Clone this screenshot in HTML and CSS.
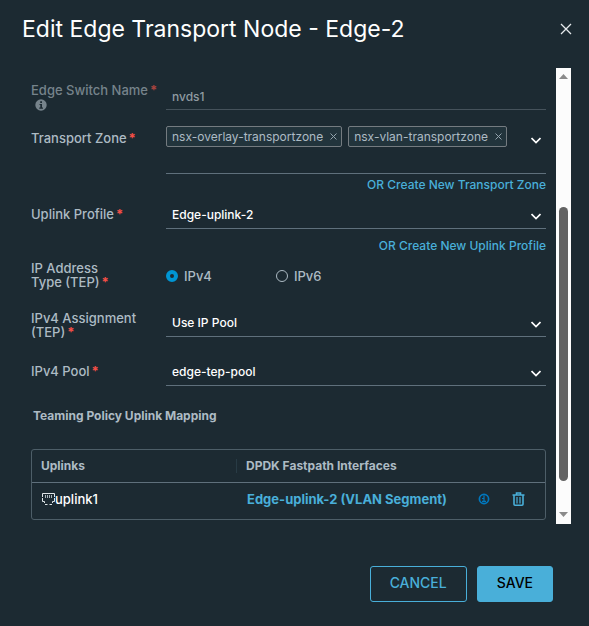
FILE: index.html
```html
<!DOCTYPE html>
<html lang="en">
<head>
<meta charset="utf-8">
<meta name="viewport" content="width=device-width, initial-scale=1">
<title>Edit Edge Transport Node</title>
<link rel="stylesheet" href="styles.css">
</head>
<body>
<form class="dialog">
  <header class="dialog-header">
    <h1 class="dialog-title">Edit Edge Transport Node - Edge-2</h1>
    <button type="button" class="icon-button" aria-label="Close">
      <svg width="12" height="12" viewBox="0 0 12 12"><path d="M1 1L11 11M11 1L1 11" fill="none" stroke="#e6eaed" stroke-width="1.3"/></svg>
    </button>
  </header>

  <div class="dialog-body">
    <div class="fields">
      <div class="row row-disabled">
        <div class="label-cell">
          <label for="switch-name">Edge Switch Name<span class="required">*</span></label>
          <svg class="info" width="12" height="12" viewBox="0 0 12 12"><circle cx="6" cy="6" r="5.7" fill="#76838b"/><path d="M4.5 5H7V8.5H8V9.7H4.3V8.5H5.3V6.1H4.5ZM5.2 2.2H7V4H5.2Z" fill="#1c2a32"/></svg>
        </div>
        <input class="control" id="switch-name" type="text" value="nvds1" disabled>
      </div>

      <div class="row row-zone">
        <label class="label-cell" for="zone">Transport Zone<span class="required">*</span></label>
        <div class="combo">
          <div class="chips">
            <span class="chip">nsx-overlay-transportzone
              <button type="button" class="icon-button" aria-label="Remove nsx-overlay-transportzone"><svg width="7" height="7" viewBox="0 0 7 7"><path d="M.5 .5L6.5 6.5M6.5 .5L.5 6.5" stroke="#93a3ad"/></svg></button>
            </span>
            <span class="chip">nsx-vlan-transportzone
              <button type="button" class="icon-button" aria-label="Remove nsx-vlan-transportzone"><svg width="7" height="7" viewBox="0 0 7 7"><path d="M.5 .5L6.5 6.5M6.5 .5L.5 6.5" stroke="#93a3ad"/></svg></button>
            </span>
            <input class="combo-input" id="zone" type="text">
          </div>
          <button type="button" class="icon-button combo-toggle" aria-label="Show transport zones"><svg width="10" height="7" viewBox="0 0 10 7"><path d="M.5 1L5 5.5L9.5 1" fill="none" stroke="#fff" stroke-width="1.7"/></svg></button>
        </div>
      </div>
      <a class="create-link" href="#zone">OR Create New Transport Zone</a>

      <div class="row row-profile">
        <label class="label-cell" for="profile">Uplink Profile<span class="required">*</span></label>
        <div class="select">
          <select class="control" id="profile"><option>Edge-uplink-2</option></select>
          <svg class="caret" width="10" height="7" viewBox="0 0 10 7"><path d="M.5 1L5 5.5L9.5 1" fill="none" stroke="#fff" stroke-width="1.7"/></svg>
        </div>
      </div>
      <a class="create-link create-profile" href="#profile">OR Create New Uplink Profile</a>

      <div class="row row-type" role="radiogroup" aria-labelledby="ip-type">
        <div class="label-cell" id="ip-type">IP Address<br>Type (TEP)<span class="required">*</span></div>
        <div class="radios">
          <label class="radio"><input type="radio" name="ip" checked>IPv4</label>
          <label class="radio"><input type="radio" name="ip">IPv6</label>
        </div>
      </div>

      <div class="row row-assign">
        <label class="label-cell" for="assignment">IPv4 Assignment (TEP)<span class="required">*</span></label>
        <div class="select">
          <select class="control" id="assignment"><option>Use IP Pool</option></select>
          <svg class="caret" width="10" height="7" viewBox="0 0 10 7"><path d="M.5 1L5 5.5L9.5 1" fill="none" stroke="#fff" stroke-width="1.7"/></svg>
        </div>
      </div>

      <div class="row row-pool">
        <label class="label-cell" for="pool">IPv4 Pool<span class="required">*</span></label>
        <div class="select">
          <select class="control" id="pool"><option>edge-tep-pool</option></select>
          <svg class="caret" width="10" height="7" viewBox="0 0 10 7"><path d="M.5 1L5 5.5L9.5 1" fill="none" stroke="#fff" stroke-width="1.7"/></svg>
        </div>
      </div>

      <h2 class="section-title">Teaming Policy Uplink Mapping</h2>

      <table class="mapping">
        <thead>
          <tr><th class="col-uplink">Uplinks</th><th><span class="divided">DPDK Fastpath Interfaces</span></th></tr>
        </thead>
        <tbody>
          <tr>
            <td>
              <div class="uplink">
                <svg width="13" height="12" viewBox="0 0 13 12"><path d="M.5 4V.5H12.5V4M.5 5V8.5H2.5V10M12.5 5V8.5H10.5V10M3 11.5H5.5M7.5 11.5H10" fill="none" stroke="#dfe5e8"/><path d="M3.5 2V5M5.5 2V5M7.5 2V5M9.5 2V5" stroke="#aab5bb"/></svg>uplink1
              </div>
            </td>
            <td>
              <div class="interface">
                <a class="interface-link" href="#interface">Edge-uplink-2 (VLAN Segment)</a>
                <button type="button" class="icon-button" aria-label="Interface details"><svg width="12" height="12" viewBox="0 0 12 12"><circle cx="6" cy="6" r="4.6" fill="none" stroke="#0077bd" stroke-width="1.7"/><path d="M4 5.5H6V8.5M4 8.3H8M6 2.5V9" fill="none" stroke="#0077bd" stroke-width="1.2"/></svg></button>
                <button type="button" class="icon-button" aria-label="Delete interface"><svg width="13" height="14" viewBox="0 0 13 14"><path d="M.5 3H12.5M4.5 2.5V1H8.5V2.5M2 3V12.3Q2 13.2 3 13.2H10Q11 13.2 11 12.3V3" fill="none" stroke="#49afd9" stroke-width="1.6"/><path d="M5 5V11.5M8 5V11.5" stroke="#49afd9" stroke-width="1.2"/></svg></button>
              </div>
            </td>
          </tr>
        </tbody>
      </table>
    </div>

    <div class="scrollbar" aria-hidden="true">
      <svg width="15" height="15" viewBox="0 0 15 15"><path d="M3 11L7.5 6L12 11Z" fill="#8b8b8b"/></svg>
      <div class="track-before"></div>
      <div class="thumb"></div>
      <div class="track-after"></div>
      <svg width="15" height="15" viewBox="0 0 15 15"><path d="M3 3L7.5 8L12 3Z" fill="#8b8b8b"/></svg>
    </div>
  </div>

  <footer class="dialog-footer">
    <button type="button" class="button">CANCEL</button>
    <button type="submit" class="button button-primary">SAVE</button>
  </footer>
</form>
</body>
</html>
```
FILE: styles.css
```css
* { box-sizing: border-box; }

body {
  margin: 0;
  background: #1c2a32;
  color: #adbbc4;
  font: 13px/14px Inter, "Open Sans", sans-serif;
}

svg { display: block; flex: none; }

button, input, select { font: inherit; color: inherit; }

.icon-button {
  padding: 0;
  border: 0;
  background: none;
}

.dialog {
  display: flex;
  flex-direction: column;
  min-height: 100vh;
}

.dialog-header {
  display: flex;
  justify-content: space-between;
  align-items: center;
  padding: 14px 17px 24px 22px;
}

.dialog-title {
  margin: 0;
  color: #fff;
  font-size: 23px;
  font-weight: 400;
  line-height: 30px;
}

.dialog-body {
  display: flex;
  gap: 10px;
  padding: 0 18px 0 31px;
}

.fields {
  flex: 1;
  min-width: 0;
  padding-top: 15px;
}

.row {
  display: grid;
  grid-template-columns: 135px 1fr;
  align-items: start;
}

.row-zone { margin-top: 15px; }

.label-cell { padding-top: 5px; font-weight: 500; }

.required {
  margin-left: 2px;
  color: #f54f47;
  font-weight: 700;
}

.row-disabled .label-cell { padding-top: 0; color: #76838b; }
.row-disabled .required { color: #a8443f; }
.info { margin: 2px 0 0 4px; }

.control {
  width: 100%;
  height: 27px;
  padding: 0 6px;
  border: 0;
  border-bottom: 1px solid #5f707c;
  border-radius: 0;
  outline: 0;
  appearance: none;
  background: none;
  color: #fff;
  font-size: 12px;
  font-weight: 500;
  line-height: 20px;
}

.control:disabled { border-color: #45525b; color: #8f9aa1; }

.select { position: relative; }
.caret { position: absolute; right: 5px; top: 11px; pointer-events: none; }

.combo {
  display: flex;
  justify-content: space-between;
  align-items: flex-start;
  height: 48px;
  padding-right: 5px;
  border-bottom: 1px solid #5f707c;
}

.combo-toggle { padding-top: 11px; }

.chips { display: flex; flex: 1; gap: 6px; min-width: 0; }

.chip {
  display: flex;
  align-items: center;
  gap: 7px;
  height: 21px;
  padding: 0 4px 0 5px;
  border: 1px solid #747b80;
  border-radius: 2px;
  background: #22343c;
  font-size: 12px;
  white-space: nowrap;
}

.combo-input {
  flex: 1;
  width: 0;
  min-width: 0;
  padding: 0;
  border: 0;
  outline: 0;
  background: none;
}

.create-link {
  display: block;
  width: fit-content;
  margin: 4px 0 0 auto;
  color: #49afd9;
  font-size: 12px;
  font-weight: 500;
  text-decoration: none;
}

.row-profile { margin-top: 10px; }
.create-profile { margin-top: 10px; }
.row-type { margin-top: 3px; }

.radios { display: flex; gap: 64px; padding-top: 13px; font-weight: 500; }
.radio { display: flex; align-items: center; gap: 6px; }

.radio input {
  width: 12px;
  height: 12px;
  margin: 0;
  border: 1px solid #adbbc4;
  border-radius: 50%;
  appearance: none;
}

.radio input:checked { border: 4px solid #0095d3; }

.row-assign { margin-top: 21px; }
.row-assign .label-cell { padding-top: 1px; }
.row-pool { margin-top: 20px; }

.section-title {
  margin: 23px 2px 26px;
  font-size: 12px;
  font-weight: 700;
  line-height: 14px;
}

.mapping {
  width: 100%;
  border: 1px solid #4d5e68;
  border-radius: 3px;
  border-spacing: 0;
  table-layout: fixed;
}

.mapping th {
  height: 33px;
  padding: 0;
  border-bottom: 1px solid #5f707c;
  font-size: 12px;
  font-weight: 700;
  text-align: left;
}

.mapping td { height: 36px; padding: 0 0 4px; color: #fff; font-weight: 500; }
.mapping .col-uplink { width: 204px; padding-left: 9px; }

.divided {
  display: block;
  padding-left: 9px;
  border-left: 1px solid #283b45;
}

.uplink { display: flex; align-items: center; padding-left: 10px; }

.interface {
  display: flex;
  justify-content: space-between;
  align-items: center;
  padding: 0 20px 0 11px;
}

.interface-link {
  margin-right: auto;
  color: #49afd9;
  font-weight: 700;
  text-decoration: none;
}

.interface .icon-button + .icon-button { margin-left: 22px; }

.scrollbar {
  display: flex;
  flex-direction: column;
  width: 15px;
  min-height: 456px;
  background: #fcfcfc;
}

.track-before { flex: 124; }
.thumb { flex: 274; margin: 0 3px; border-radius: 5px; background: #636363; }
.track-after { flex: 28; }

.dialog-footer {
  display: flex;
  justify-content: flex-end;
  gap: 10px;
  padding: 42px 36px 24px;
}

.button {
  height: 36px;
  padding: 0 19px 2px;
  border: 1px solid #49afd9;
  border-radius: 3px;
  background: none;
  color: #49afd9;
  font-size: 14px;
  font-weight: 500;
}

.button-primary { background: #49afd9; color: #000; }
```
